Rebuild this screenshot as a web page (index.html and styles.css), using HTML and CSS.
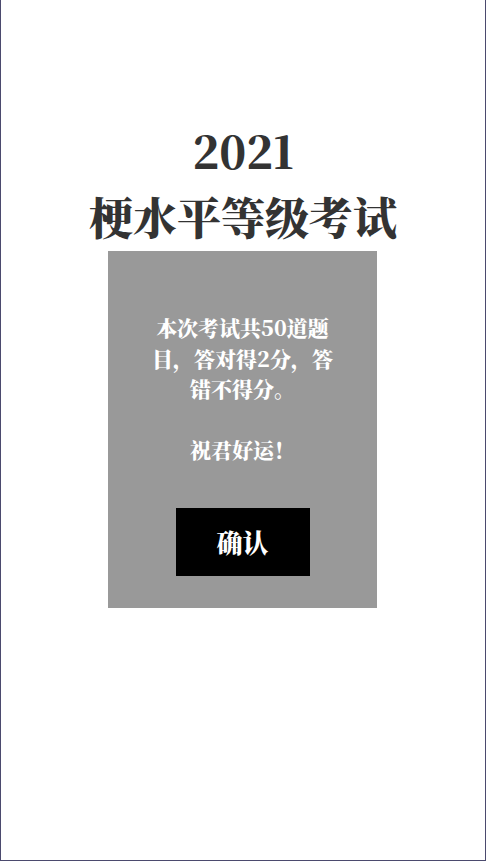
FILE: index.html
```html
<!DOCTYPE html>
<html lang="zh-CN">
<head>
<meta charset="utf-8">
<title>梗水平等级考试</title>
<link rel="stylesheet" href="styles.css">
</head>
<body>
<div class="page">
  <h1 class="title">2021<br>梗水平等级考试</h1>
  <div class="card">
    <div class="intro">
      <p class="rule">本次考试共50道题目，答对得2分，答错不得分。</p>
      <p class="rule wish">祝君好运！</p>
    </div>
    <button class="confirm" type="button">确认</button>
  </div>
</div>
</body>
</html>
```
FILE: styles.css
```css
html, body {
  margin: 0;
  padding: 0;
  background: #ffffff;
}
.page {
  box-sizing: border-box;
  width: 486px;
  height: 861px;
  border-left: 1px solid #4b4a6e;
  border-right: 1px solid #4b4a6e;
  border-bottom: 1px solid #4b4a6e;
  padding-top: 117px;
  font-family: "Noto Serif CJK SC", "Noto Sans CJK SC", serif;
  display: flex;
  flex-direction: column;
  align-items: center;
}
.title {
  margin: 0;
  font-size: 44px;
  line-height: 66px;
  font-weight: 900;
  color: #333333;
  text-align: center;
}
.card {
  margin-top: 2px;
  margin-right: 1px;
  width: 269px;
  box-sizing: border-box;
  background: #999999;
  padding: 61px 42px 32px;
  display: flex;
  flex-direction: column;
  align-items: center;
}
.intro {
  width: 100%;
}
.rule {
  margin: 0;
  color: #ffffff;
  font-size: 21px;
  line-height: 30.5px;
  font-weight: 900;
  text-align: center;
}
.wish {
  margin-top: 30.5px;
}
.confirm {
  margin-top: 43px;
  width: 134px;
  height: 68px;
  border: none;
  background: #000000;
  color: #ffffff;
  font-family: inherit;
  font-size: 26px;
  font-weight: 900;
  padding: 0;
  line-height: 68px;
  cursor: pointer;
}
```
